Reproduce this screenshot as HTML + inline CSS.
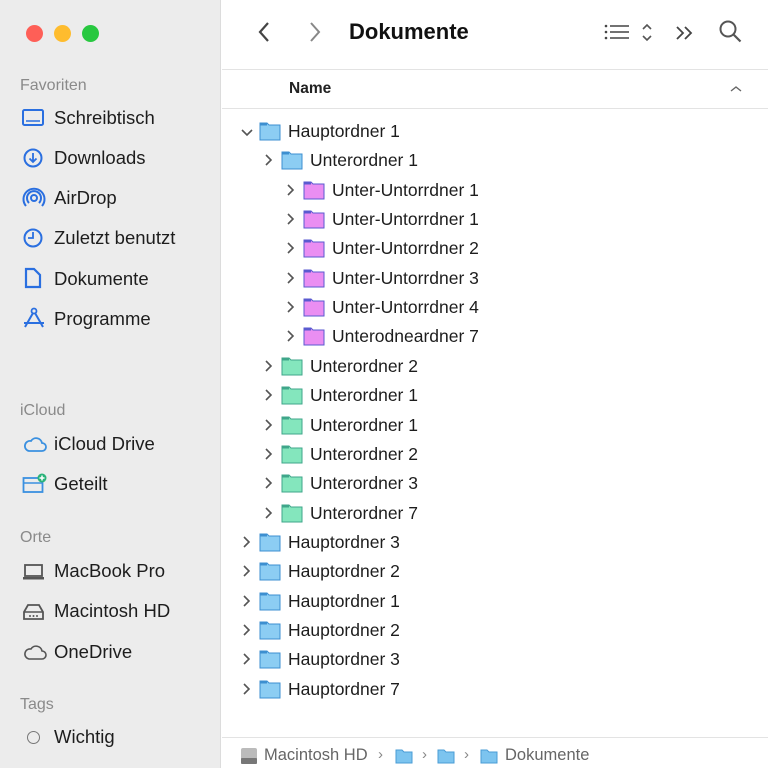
<!DOCTYPE html>
<html><head><meta charset="utf-8"><style>
*{margin:0;padding:0;box-sizing:border-box}
body{width:768px;height:768px;overflow:hidden;font-family:"Liberation Sans",sans-serif;background:#fff;position:relative;color:#1d1d1d}
#side{position:absolute;left:0;top:0;width:221px;height:768px;background:#ececec;border-right:1px solid #dcdcdc}
.dot{position:absolute;top:25px;width:17px;height:17px;border-radius:50%}
.sh{position:absolute;left:20px;font-size:16px;color:#8a8a8a}
.si{position:absolute;left:54px;font-size:18.5px;color:#1d1d1d}
.ic{position:absolute;left:22px}
.row{position:absolute;font-size:17.5px;color:#1d1d1d;height:22px;line-height:22px}
.row svg{position:absolute;top:2px}
.tb{position:absolute;font-size:22px;font-weight:bold}
</style></head><body>
<div id="side">
<div class="dot" style="left:26px;background:#fe5f57"></div>
<div class="dot" style="left:54px;background:#febc2e"></div>
<div class="dot" style="left:82px;background:#28c840"></div>
<div class="sh" style="top:77px">Favoriten</div>
<svg class="ic" style="top:108px" width="22" height="20"><rect x="1" y="2" width="20" height="15" rx="1.5" fill="none" stroke="#2a6fe0" stroke-width="2"/><line x1="4" y1="13" x2="18" y2="13" stroke="#2a6fe0" stroke-width="1.5"/></svg>
<div class="si" style="top:107px">Schreibtisch</div>
<svg class="ic" style="top:147px" width="22" height="22"><circle cx="11" cy="11" r="8.5" fill="none" stroke="#2a6fe0" stroke-width="2"/><path d="M11 6v9M7.5 11.5L11 15l3.5-3.5" fill="none" stroke="#2a6fe0" stroke-width="1.8"/></svg>
<div class="si" style="top:147px">Downloads</div>
<svg class="ic" style="top:187px" width="24" height="22"><circle cx="12" cy="11" r="3" fill="none" stroke="#2a6fe0" stroke-width="2"/><path d="M7 16a7 7 0 1 1 10 0M4 19a10.5 10.5 0 1 1 16 0" fill="none" stroke="#2a6fe0" stroke-width="2"/></svg>
<div class="si" style="top:187px">AirDrop</div>
<svg class="ic" style="top:227px" width="22" height="22"><circle cx="11" cy="11" r="8.5" fill="none" stroke="#2a6fe0" stroke-width="2"/><path d="M11 5v6H6" fill="none" stroke="#2a6fe0" stroke-width="1.8"/></svg>
<div class="si" style="top:227px">Zuletzt benutzt</div>
<svg class="ic" style="top:267px" width="22" height="22"><path d="M4 2h8l6 6v12H4z" fill="none" stroke="#2a6fe0" stroke-width="2.2"/></svg>
<div class="si" style="top:268px">Dokumente</div>
<svg class="ic" style="top:307px" width="24" height="24"><circle cx="12" cy="4" r="2.5" fill="none" stroke="#2a6fe0" stroke-width="1.8"/><path d="M11 6L3 20M13 6l8 14M2 16h20" fill="none" stroke="#2a6fe0" stroke-width="2"/></svg>
<div class="si" style="top:308px">Programme</div>
<div class="sh" style="top:402px">iCloud</div>
<svg class="ic" style="top:434px" width="26" height="20"><path d="M7 17h13a4 4 0 0 0 0-8 6 6 0 0 0-11-2 5 5 0 0 0-2 10z" fill="none" stroke="#3a90e0" stroke-width="1.8"/></svg>
<div class="si" style="top:433px">iCloud Drive</div>
<svg class="ic" style="top:472px" width="26" height="24"><rect x="1.5" y="6" width="19" height="14" fill="none" stroke="#3a90e0" stroke-width="1.8"/><line x1="2" y1="11" x2="20" y2="11" stroke="#3a90e0" stroke-width="1.5"/><circle cx="20" cy="6" r="4.5" fill="#2ab37a"/><path d="M20 3.5v5M17.5 6h5" stroke="#fff" stroke-width="1.5"/></svg>
<div class="si" style="top:473px">Geteilt</div>
<div class="sh" style="top:529px">Orte</div>
<svg class="ic" style="top:562px" width="24" height="20"><rect x="3" y="3" width="17" height="11" fill="none" stroke="#555" stroke-width="1.8"/><rect x="1" y="15" width="21" height="2.5" fill="#555"/></svg>
<div class="si" style="top:560px">MacBook Pro</div>
<svg class="ic" style="top:600px" width="24" height="22"><path d="M2 12L6 5h11l4 7v7H2z" fill="none" stroke="#555" stroke-width="1.8"/><line x1="2" y1="12" x2="21" y2="12" stroke="#555" stroke-width="1.5"/><circle cx="8" cy="16" r="1" fill="#555"/><circle cx="11.5" cy="16" r="1" fill="#555"/><circle cx="15" cy="16" r="1" fill="#555"/></svg>
<div class="si" style="top:600px">Macintosh HD</div>
<svg class="ic" style="top:642px" width="26" height="20"><path d="M7 17h13a4 4 0 0 0 0-8 6 6 0 0 0-11-2 5 5 0 0 0-2 10z" fill="none" stroke="#555" stroke-width="1.6"/></svg>
<div class="si" style="top:641px">OneDrive</div>
<div class="sh" style="top:696px">Tags</div>
<div style="position:absolute;left:27px;top:731px;width:13px;height:13px;border:1.5px solid #777;border-radius:50%"></div>
<div class="si" style="top:726px">Wichtig</div>
</div>

<svg style="position:absolute;left:255px;top:20px" width="20" height="24"><path d="M13 3L5 12l8 9" fill="none" stroke="#444" stroke-width="2.2"/></svg>
<svg style="position:absolute;left:305px;top:20px" width="20" height="24"><path d="M6 3l8 9-8 9" fill="none" stroke="#888" stroke-width="2"/></svg>
<div class="tb" style="left:349px;top:19px;font-weight:bold;color:#111">Dokumente</div>
<svg style="position:absolute;left:603px;top:22px" width="60" height="22"><circle cx="3" cy="4" r="1.3" fill="#444"/><circle cx="3" cy="10" r="1.3" fill="#444"/><circle cx="3" cy="16" r="1.3" fill="#444"/><path d="M7 4h19M7 10h19M7 16h19" stroke="#444" stroke-width="1.6"/><path d="M40 7l4-4 4 4M40 14l4 4 4-4" fill="none" stroke="#555" stroke-width="1.6"/></svg>
<svg style="position:absolute;left:675px;top:24px" width="22" height="18"><path d="M2 3l6 6-6 6M10 3l6 6-6 6" fill="none" stroke="#444" stroke-width="1.8"/></svg>
<svg style="position:absolute;left:718px;top:19px" width="26" height="26"><circle cx="10" cy="10" r="7.5" fill="none" stroke="#555" stroke-width="2"/><path d="M15.5 15.5l7 7" stroke="#555" stroke-width="2.2"/></svg>
<div style="position:absolute;left:222px;top:69px;width:546px;height:1px;background:#e3e3e3"></div>
<div style="position:absolute;left:289px;top:80px;font-size:15.5px;font-weight:bold;color:#222">Name</div>
<svg style="position:absolute;left:729px;top:84px" width="14" height="10"><path d="M2 7l5-4 5 4" fill="none" stroke="#666" stroke-width="1.4"/></svg>
<div style="position:absolute;left:222px;top:108px;width:546px;height:1px;background:#e3e3e3"></div>

<div id="tree"></div>

<div style="position:absolute;left:222px;top:737px;width:546px;height:1px;background:#e3e3e3"></div>
<svg style="position:absolute;left:240px;top:746px" width="18" height="20"><rect x="1" y="2" width="16" height="16" rx="2" fill="#bbb"/><rect x="1" y="12" width="16" height="6" rx="1" fill="#777"/></svg>
<div style="position:absolute;left:264px;top:746px;font-size:16.5px;color:#666">Macintosh HD</div>
<div style="position:absolute;left:378px;top:746px;font-size:15px;color:#888">›</div>
<svg style="position:absolute;left:395px;top:748px" width="18" height="16"><path d="M1 2h6l2 2h8v11H1z" fill="#7cc4ef" stroke="#4a9cd6"/></svg>
<div style="position:absolute;left:422px;top:746px;font-size:15px;color:#888">›</div>
<svg style="position:absolute;left:437px;top:748px" width="18" height="16"><path d="M1 2h6l2 2h8v11H1z" fill="#7cc4ef" stroke="#4a9cd6"/></svg>
<div style="position:absolute;left:464px;top:746px;font-size:15px;color:#888">›</div>
<svg style="position:absolute;left:480px;top:748px" width="18" height="16"><path d="M1 2h6l2 2h8v11H1z" fill="#7cc4ef" stroke="#4a9cd6"/></svg>
<div style="position:absolute;left:505px;top:746px;font-size:16.5px;color:#666">Dokumente</div>

<script>
var rows=[[0,1,'b','Hauptordner 1'],[1,0,'b','Unterordner 1'],
[2,0,'p','Unter-Untorrdner 1'],[2,0,'p','Unter-Untorrdner 1'],[2,0,'p','Unter-Untorrdner 2'],[2,0,'p','Unter-Untorrdner 3'],[2,0,'p','Unter-Untorrdner 4'],[2,0,'p','Unterodneardner 7'],
[1,0,'g','Unterordner 2'],[1,0,'g','Unterordner 1'],[1,0,'g','Unterordner 1'],[1,0,'g','Unterordner 2'],[1,0,'g','Unterordner 3'],[1,0,'g','Unterordner 7'],
[0,0,'b','Hauptordner 3'],[0,0,'b','Hauptordner 2'],[0,0,'b','Hauptordner 1'],[0,0,'b','Hauptordner 2'],[0,0,'b','Hauptordner 3'],[0,0,'b','Hauptordner 7']];
var col={b:['#8ccdf3','#3d8fd0'],p:['#ea8ef2','#5a5ad0'],g:['#84e6bd','#3fa68a']};
var h='';
rows.forEach(function(r,i){
 var y=120+i*29.35, x=240+r[0]*22, c=col[r[2]];
 var chev=r[1]?'<path d="M2 6l5 5 5-5" fill="none" stroke="#555" stroke-width="1.6"/>':'<path d="M4 2l5 5-5 5" fill="none" stroke="#555" stroke-width="1.6"/>';
 h+='<div class="row" style="left:'+x+'px;top:'+y+'px;width:300px">'
 +'<svg style="left:0;top:4px" width="14" height="14">'+chev+'</svg>'
 +'<svg style="left:19px;top:1px" width="22" height="20"><path d="M1 2h7l2 2h11v15H1z" fill="'+c[0]+'" stroke="'+c[1]+'" stroke-width="1"/><rect x="1" y="2" width="7" height="2.5" fill="'+c[1]+'"/></svg>'
 +'<span style="position:absolute;left:48px;top:0">'+r[3]+'</span></div>';
});
document.getElementById('tree').innerHTML=h;
</script>
</body></html>
